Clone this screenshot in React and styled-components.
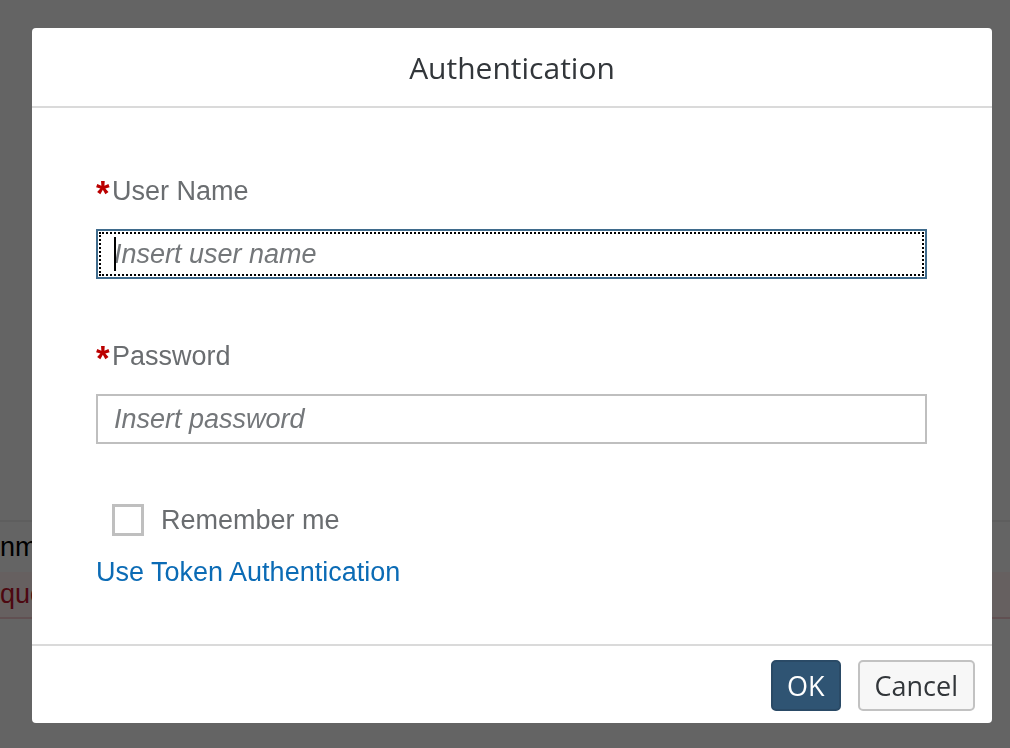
import React from "react";
import styled, { createGlobalStyle } from "styled-components";

const GlobalStyle = createGlobalStyle`
  html, body {
    margin: 0;
    padding: 0;
    background: #fbfbfb;
    font-family: "Liberation Sans", Arial, sans-serif;
  }
  * {
    box-sizing: border-box;
  }
`;

const Page = styled.div`
  height: 748px;
  overflow: hidden;
  padding-top: 520px;
`;

const Row = styled.div`
  height: ${(p) => (p.$error ? "47px" : "52px")};
  display: flex;
  align-items: center;
  font-size: 27px;
  white-space: nowrap;
  color: ${(p) => (p.$error ? "#c0142c" : "#000")};
  background: ${(p) => (p.$error ? "#fff0f0" : "#fbfbfb")};
  border-top: ${(p) => (p.$error ? "none" : "2px solid #ececec")};
  border-bottom: ${(p) => (p.$error ? "2px solid #f3c8cc" : "none")};
`;

const Overlay = styled.div`
  position: fixed;
  inset: 0;
  background: rgba(0, 0, 0, 0.6);
  display: flex;
  padding: 28px 18px 25px 32px;
`;

const Dialog = styled.div`
  flex: 1;
  display: flex;
  flex-direction: column;
  background: #fff;
  border-radius: 4px;
  overflow: hidden;
`;

const Header = styled.div`
  height: 80px;
  flex-shrink: 0;
  display: flex;
  align-items: center;
  justify-content: center;
  border-bottom: 2px solid #dadada;
`;

const Title = styled.h1`
  margin: 0;
  font-family: "Open Sans", sans-serif;
  font-weight: 400;
  font-size: 30px;
  color: #32363a;
`;

const Content = styled.div`
  flex: 1;
  padding: 67px 65px 0 64px;
`;

const Field = styled.div`
  margin-bottom: ${(p) => p.$gap || "0"};
`;

const Label = styled.label`
  display: block;
  height: 32px;
  font-size: 27px;
  line-height: 32px;
  color: #6a6d70;
`;

const Required = styled.span`
  display: inline-block;
  vertical-align: top;
  width: 16px;
  height: 32px;
  color: #bb0000;
  font-weight: 700;
  font-size: 35px;
  line-height: 32px;
  transform: translateY(2px);
`;

const InputWrap = styled.div`
  position: relative;
  margin-top: 22px;
`;

const Input = styled.input`
  display: block;
  width: 100%;
  height: 50px;
  padding: 0 16px;
  border: 2px solid ${(p) => (p.$focused ? "#3f6b8c" : "#bfbfbf")};
  border-radius: 0;
  background: #fff;
  font-family: "Liberation Sans", Arial, sans-serif;
  font-size: 27px;
  color: #32363a;
  outline: ${(p) => (p.$focused ? "2px dotted #000" : "none")};
  outline-offset: -5px;

  &::placeholder {
    color: #74777a;
    font-style: italic;
  }
`;

const Caret = styled.span`
  position: absolute;
  left: 18px;
  top: 8px;
  width: 2px;
  height: 34px;
  background: #000;
`;

const CheckRow = styled.label`
  display: flex;
  align-items: center;
  gap: 17px;
  margin-top: 60px;
  padding-left: 16px;
  font-size: 27px;
  line-height: 32px;
  color: #6a6d70;
`;

const CheckBox = styled.span`
  width: 32px;
  height: 32px;
  border: 3px solid #bfbfbf;
  background: #fff;
`;

const Link = styled.a`
  display: inline-block;
  margin-top: 20px;
  font-size: 27px;
  line-height: 32px;
  color: #0b6bb5;
  text-decoration: none;
  cursor: pointer;
`;

const Footer = styled.div`
  height: 79px;
  flex-shrink: 0;
  display: flex;
  align-items: center;
  justify-content: flex-end;
  gap: 17px;
  padding: 2px 17px 0 0;
  border-top: 2px solid #dadada;
`;

const Button = styled.button`
  height: 51px;
  padding: 0 ${(p) => (p.$primary ? "14px" : "15px")};
  border: 2px solid ${(p) => (p.$primary ? "#2a4a66" : "#c2c2c2")};
  border-radius: 5px;
  background: ${(p) => (p.$primary ? "#2f5473" : "#f7f7f7")};
  color: ${(p) => (p.$primary ? "#fff" : "#32363a")};
  font-family: "Open Sans", sans-serif;
  font-size: 27px;
  cursor: pointer;
`;

export default function App() {
  return (
    <>
      <GlobalStyle />
      <Page>
        <Row>nmary of the request</Row>
        <Row $error>quest failed</Row>
      </Page>
      <Overlay>
        <Dialog>
          <Header>
            <Title>Authentication</Title>
          </Header>
          <Content>
            <Field $gap="61px">
              <Label>
                <Required>*</Required>User Name
              </Label>
              <InputWrap>
                <Input $focused placeholder="Insert user name" />
                <Caret />
              </InputWrap>
            </Field>
            <Field>
              <Label>
                <Required>*</Required>Password
              </Label>
              <InputWrap>
                <Input type="password" placeholder="Insert password" />
              </InputWrap>
            </Field>
            <CheckRow>
              <CheckBox />
              Remember me
            </CheckRow>
            <Link>Use Token Authentication</Link>
          </Content>
          <Footer>
            <Button $primary>OK</Button>
            <Button>Cancel</Button>
          </Footer>
        </Dialog>
      </Overlay>
    </>
  );
}
